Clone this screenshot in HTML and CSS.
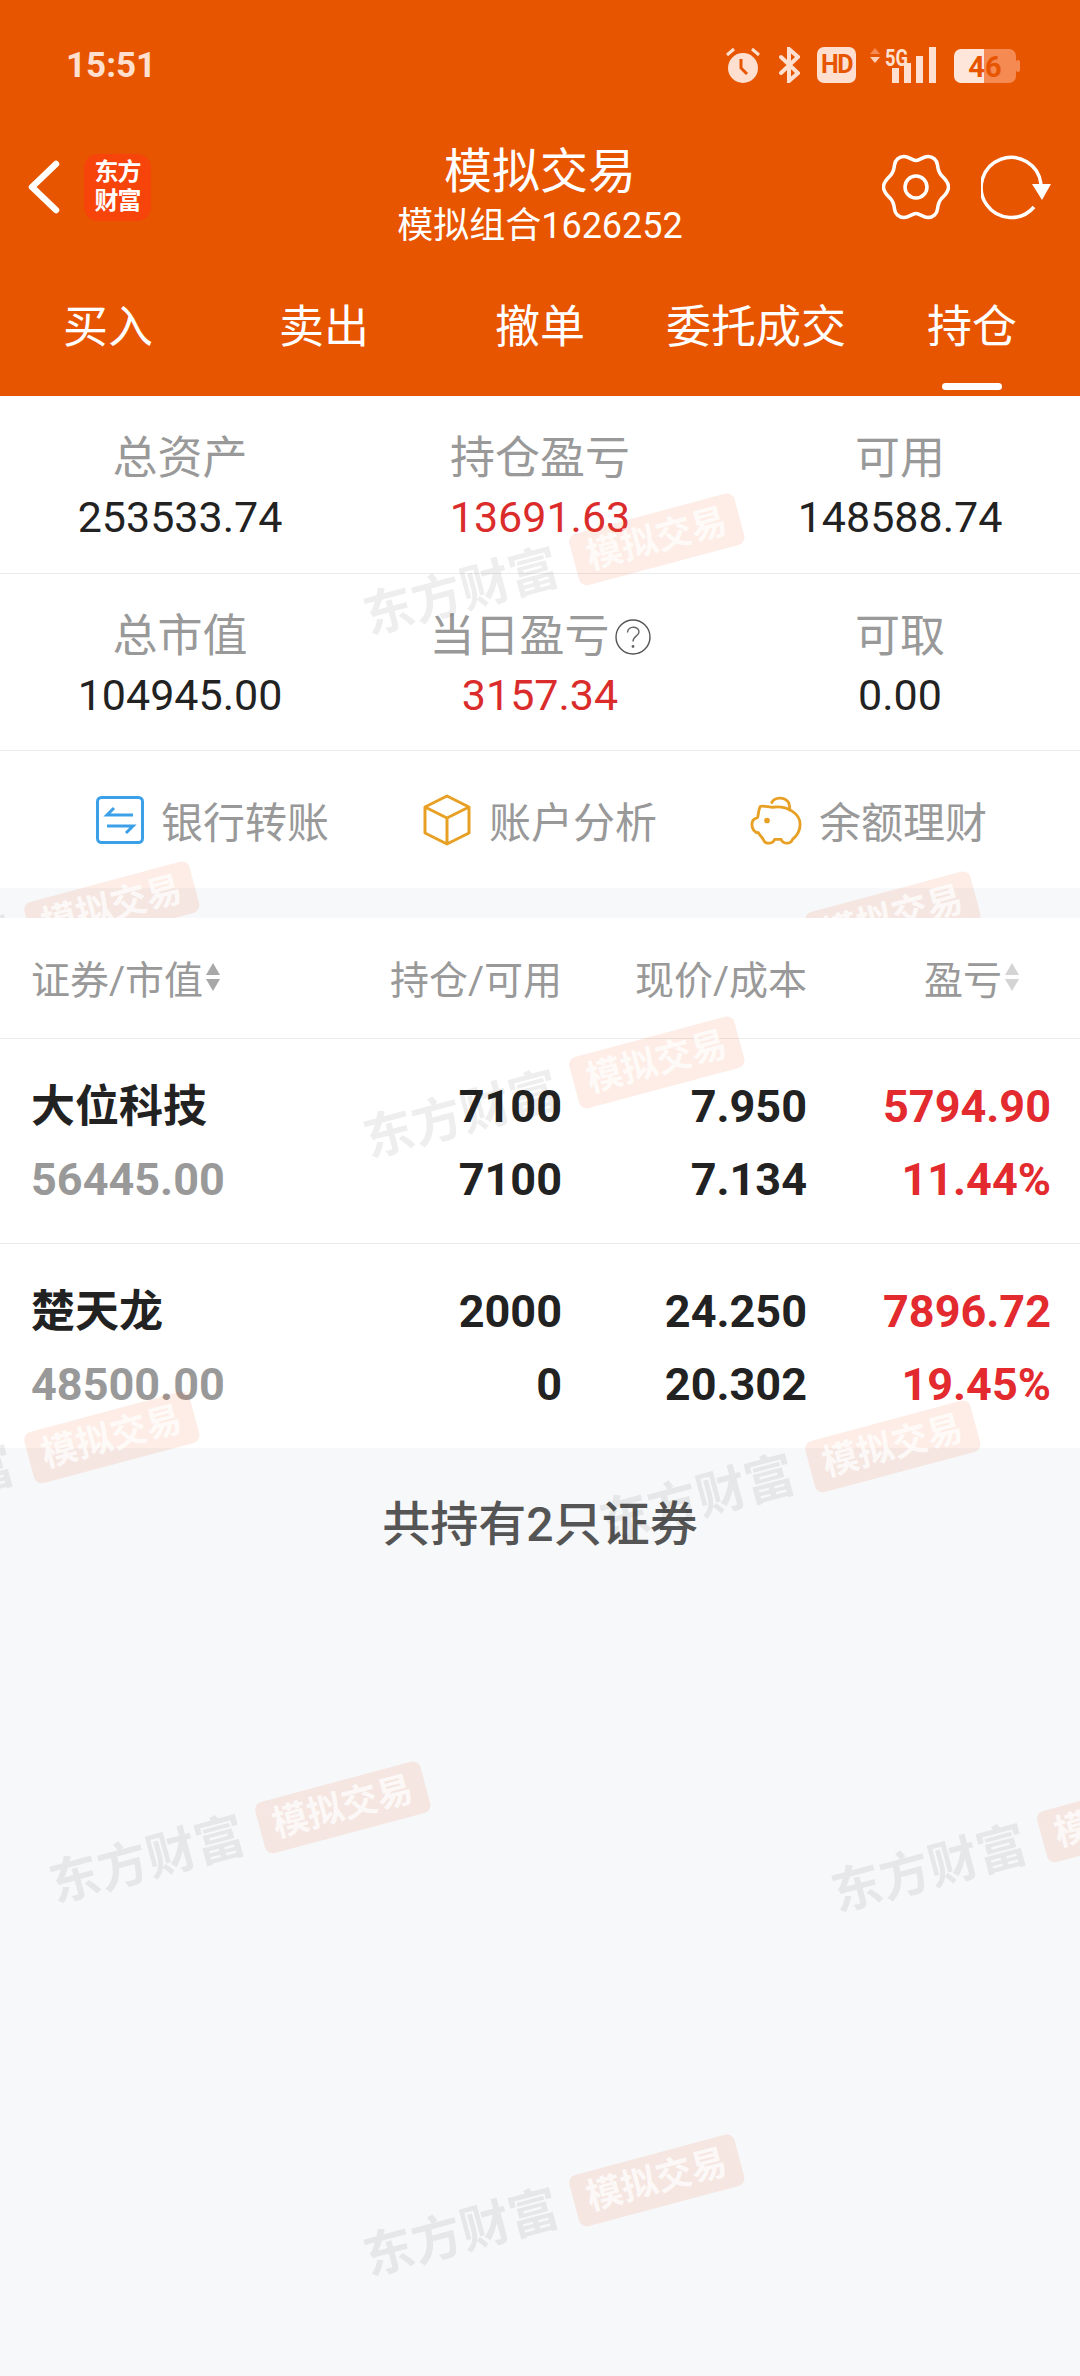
FILE: index.html
```html
<!DOCTYPE html>
<html lang="zh-CN">
<head>
<meta charset="utf-8">
<title>模拟交易</title>
<link rel="stylesheet" href="styles.css">
</head>
<body>
<div class="page">
  <header class="header">
    <div class="status">
      <span class="time">15:51</span>
      <div class="status-icons">
        <svg class="ic-alarm" width="36" height="36" viewBox="0 0 36 36"><circle cx="18" cy="21" r="15" fill="#FFE0D0"/><path d="M2 8 9 2M34 8 27 2" stroke="#FFE0D0" stroke-width="3" fill="none"/><path d="M16 12V21L22 27" stroke="#E75500" stroke-width="3" fill="none"/></svg>
        <svg class="ic-bt" width="21" height="36" viewBox="0 0 21 36"><path d="M2 10 19 26 10 34V2L19 10 2 26" stroke="#FFE0D0" stroke-width="4" fill="none" stroke-linecap="round"/></svg>
        <span class="hd">HD</span>
        <svg class="ic-net" width="67" height="36" viewBox="0 0 67 36"><path d="M0 7 5 1 10 7Z" fill="#F58A52"/><path d="M0 10H10L5 16Z" fill="#FFD0B8"/><text x="15" y="19" class="net-text" textLength="23" lengthAdjust="spacingAndGlyphs">5G</text><path d="M22 21h7v15h-7zM34 16h7v20h-7zM46 9h7v27h-7zM59 0h7v36h-7z" fill="#FFE0D0"/></svg>
        <svg class="ic-bat" width="67" height="36" viewBox="0 0 67 36"><path d="M8 2H31V36H8A7 7 0 0 1 1 29V9A7 7 0 0 1 8 2Z" fill="#FFE6DA"/><path d="M31 2H56A7 7 0 0 1 63 9V29A7 7 0 0 1 56 36H31Z" fill="#F58A52"/><rect x="63" y="13" width="4" height="12" rx="2" fill="#F58A52"/><text x="32" y="30" class="bat-text">46</text></svg>
      </div>
    </div>
    <div class="nav">
      <div class="nav-side">
        <svg class="ic-back" width="34" height="54" viewBox="0 0 34 54"><path d="M29 4 5 27 29 50" stroke="#fff" stroke-width="6.5" fill="none" stroke-linecap="round" stroke-linejoin="round"/></svg>
        <div class="logo"><span>东方</span><span>财富</span></div>
      </div>
      <div class="nav-title">
        <div class="title">模拟交易</div>
        <div class="subtitle">模拟组合1626252</div>
      </div>
      <div class="nav-side nav-right">
        <svg class="ic-gear" width="68" height="68" viewBox="0 0 68 68"><path d="M34 7.5C38 7.5 41 3.5 46 3.5C51 3.5 55 7 55.5 12C56 17 57 20 60 23C63 26 66.5 29 66.5 34C66.5 39 63 42 60 45C57 48 56 51 55.5 56C55 61 51 64.5 46 64.5C41 64.5 38 60.5 34 60.5C30 60.5 27 64.5 22 64.5C17 64.5 13 61 12.5 56C12 51 11 48 8 45C5 42 1.5 39 1.5 34C1.5 29 5 26 8 23C11 20 12 17 12.5 12C13 7 17 3.5 22 3.5C27 3.5 30 7.5 34 7.5Z" stroke="#fff" stroke-width="3.5" fill="none"/><circle cx="34" cy="34" r="11" stroke="#fff" stroke-width="3.5" fill="none"/></svg>
        <svg class="ic-refresh" width="72" height="68" viewBox="0 0 72 68"><path d="M53 54A30 30 0 1 1 60 31" stroke="#fff" stroke-width="3.5" fill="none"/><path d="M51 31H70L61 47Z" fill="#fff"/></svg>
      </div>
    </div>
    <nav class="tabs">
      <div class="tab">买入</div>
      <div class="tab">卖出</div>
      <div class="tab">撤单</div>
      <div class="tab">委托成交</div>
      <div class="tab tab-active">持仓<i class="tab-bar"></i></div>
    </nav>
  </header>

  <section class="stats">
    <div class="stat-row">
      <div class="stat"><div class="stat-label">总资产</div><div class="stat-value">253533.74</div></div>
      <div class="stat"><div class="stat-label">持仓盈亏</div><div class="stat-value red">13691.63</div></div>
      <div class="stat"><div class="stat-label">可用</div><div class="stat-value">148588.74</div></div>
    </div>
    <div class="stat-row">
      <div class="stat"><div class="stat-label">总市值</div><div class="stat-value">104945.00</div></div>
      <div class="stat"><div class="stat-label">当日盈亏<svg class="ic-help" width="36" height="36" viewBox="0 0 36 36"><circle cx="18" cy="18" r="17" stroke="#555" stroke-width="1.4" fill="none"/><path d="M12.5 13.5C12.5 6.5 24 6.5 24 13C24 17 18 17 18 22.5" stroke="#666" stroke-width="1.4" fill="none"/><circle cx="18" cy="27.5" r="1.4" fill="#666"/></svg></div><div class="stat-value red">3157.34</div></div>
      <div class="stat"><div class="stat-label">可取</div><div class="stat-value">0.00</div></div>
    </div>
  </section>

  <section class="actions">
    <div class="action">
      <svg width="48" height="48" viewBox="0 0 48 48"><rect x="1.5" y="1.5" width="45" height="45" rx="4" stroke="#3BA0E8" stroke-width="3" fill="none"/><path d="M18 12 11 19H37M11 30H37L30 37" stroke="#3BA0E8" stroke-width="3" fill="none"/></svg>
      <span>银行转账</span>
    </div>
    <div class="action">
      <svg width="50" height="52" viewBox="0 0 50 52"><path d="M25 2 47 13V39L25 50 3 39V13ZM3 13 25 24 47 13M25 24V50" stroke="#E8A024" stroke-width="3" fill="none" stroke-linejoin="round"/></svg>
      <span>账户分析</span>
    </div>
    <div class="action">
      <svg width="52" height="52" viewBox="0 0 55 53"><path d="M11 12C15 11 20 13 24 13C40 11 53 20 53 31C53 38 50 43 45 47C44 50 42 51 39 51C36 51 34 50 33 47L26 47C25 50 23 51 20 51C17 51 15 50 14 47C12 44 10 42 9 40C5 40 2 36 2 31C2 27 4 25 8 24C9 21 9 15 11 12Z" stroke="#E8A024" stroke-width="3" fill="none" stroke-linejoin="round"/><path d="M23 8C26 2 36 2 40 7C42 9 42 12 42 16" stroke="#E8A024" stroke-width="3" fill="none" stroke-linecap="round"/><circle cx="18" cy="27" r="3" fill="#E8A024"/></svg>
      <span>余额理财</span>
    </div>
  </section>

  <section class="table">
    <div class="thead">
      <div class="th th-left">证券/市值<svg class="ic-sort" width="18" height="30" viewBox="0 0 18 30"><path d="M9 1 16 13H2ZM2 17H16L9 29Z" fill="#A8A8A8"/></svg></div>
      <div class="th">持仓/可用</div>
      <div class="th">现价/成本</div>
      <div class="th th-last">盈亏<svg class="ic-sort" width="18" height="30" viewBox="0 0 18 30"><path d="M9 1 16 13H2ZM2 17H16L9 29Z" fill="#D4D4D4"/></svg></div>
    </div>
    <div class="trow">
      <div class="name">大位科技</div><div class="num">7100</div><div class="num">7.950</div><div class="num red-b">5794.90</div>
      <div class="num-l">56445.00</div><div class="num">7100</div><div class="num">7.134</div><div class="num red-b">11.44%</div>
    </div>
    <div class="trow trow-last">
      <div class="name">楚天龙</div><div class="num">2000</div><div class="num">24.250</div><div class="num red-b">7896.72</div>
      <div class="num-l">48500.00</div><div class="num">0</div><div class="num">20.302</div><div class="num red-b">19.45%</div>
    </div>
  </section>

  <div class="summary">共持有2只证券</div>

  <div class="wm wm-under wm-2"><span class="wm-name">东方财富</span><span class="wm-badge">模拟交易</span></div>
  <div class="wm wm-under wm-3"><span class="wm-name">东方财富</span><span class="wm-badge">模拟交易</span></div>
  <div class="wm wm-1"><span class="wm-name">东方财富</span><span class="wm-badge">模拟交易</span></div>
  <div class="wm wm-4"><span class="wm-name">东方财富</span><span class="wm-badge">模拟交易</span></div>
  <div class="wm wm-5"><span class="wm-name">东方财富</span><span class="wm-badge">模拟交易</span></div>
  <div class="wm wm-6"><span class="wm-name">东方财富</span><span class="wm-badge">模拟交易</span></div>
  <div class="wm wm-7"><span class="wm-name">东方财富</span><span class="wm-badge">模拟交易</span></div>
  <div class="wm wm-8"><span class="wm-name">东方财富</span><span class="wm-badge">模拟交易</span></div>
  <div class="wm wm-9"><span class="wm-name">东方财富</span><span class="wm-badge">模拟交易</span></div>
</div>
</body>
</html>
```
FILE: styles.css
```css
* { box-sizing: border-box; }
html, body { margin: 0; padding: 0; }
body {
  font-family: Roboto, "Noto Sans CJK SC", sans-serif;
  background: #F7F8FA;
}
.page {
  position: relative;
  width: 1080px;
  height: 2376px;
  overflow: hidden;
  background: #F7F8FA;
}

/* header */
.header { background: #E75500; height: 396px; color: #fff; }
.status { height: 130px; display: flex; align-items: center; padding: 0 60px 0 66px; }
.time { font-size: 35px; font-weight: 700; color: #FFE0D0; }
.status-icons { margin-left: auto; display: flex; align-items: center; }
.ic-alarm { margin-right: 18px; }
.ic-bt { margin-right: 17px; }
.hd {
  width: 39px; height: 36px; margin-right: 14px;
  background: #FFE0D0; color: #E75500; border-radius: 7px;
  font-size: 25px; font-weight: 700; line-height: 36px; text-align: center;
  letter-spacing: -1.5px;
}
.ic-net { margin-right: 16px; overflow: visible; }
.net-text { font-size: 24px; font-weight: 700; fill: #FFE0D0; }
.bat-text { font-size: 29px; font-weight: 700; fill: #E75500; text-anchor: middle; }

.nav { height: 132px; display: grid; grid-template-columns: 1fr auto 1fr; align-items: start; }
.nav-side { height: 114px; display: flex; align-items: center; padding-left: 27px; }
.nav-right { justify-content: flex-end; padding: 0 27px 0 0; }
.ic-back { margin-right: 23px; }
.logo {
  width: 67px; height: 67px; border-radius: 14px;
  background: #F6440B; color: #fff;
  display: flex; flex-direction: column; align-items: center; justify-content: center;
  font-size: 24px; font-weight: 700; line-height: 29px; letter-spacing: -1px;
}
.ic-gear { margin-right: 31px; }
.nav-title { text-align: center; padding-top: 14px; }
.title { font-size: 48px; line-height: 56px; }
.subtitle { font-size: 36px; line-height: 44px; margin-top: 4px; }

.tabs { display: grid; grid-template-columns: repeat(5, 1fr); height: 134px; padding-top: 41px; }
.tab { display: flex; flex-direction: column; align-items: center; font-size: 45px; line-height: 50px; }
.tab-bar { display: block; width: 60px; height: 7px; margin-top: 30px; background: #fff; border-radius: 4px; }

/* stats */
.stats { background: #fff; }
.stat-row {
  display: grid; grid-template-columns: repeat(3, 1fr);
  height: 177.5px; padding-top: 33px;
  border-bottom: 1px solid #EBEBEB;
  text-align: center;
}
.stat-label {
  display: flex; align-items: center; justify-content: center; gap: 5px;
  font-size: 45px; line-height: 60px; color: #999;
}
.stat-value { font-size: 43px; line-height: 50px; margin-top: 3px; color: #222; }
.red { color: #DB2C2C; }

/* actions */
.actions {
  height: 137px; background: #fff; padding-left: 3px;
  display: flex; align-items: center; justify-content: space-evenly;
  margin-bottom: 30px;
}
.action { display: flex; align-items: center; gap: 17px; font-size: 42px; color: #999; }

/* table */
.table { position: relative; z-index: 1; background: #fff; }
.thead, .trow {
  display: grid;
  grid-template-columns: 282px 249px 245px 244px;
  padding: 0 29px 0 31px;
  border-bottom: 1px solid #EBEBEB;
}
.thead { height: 121px; align-items: center; padding-bottom: 2px; }
.th {
  display: flex; align-items: center; justify-content: flex-end;
  font-size: 39px; color: #999;
}
.th-left { justify-content: flex-start; }
.th-last { padding-right: 30px; }
.ic-sort { margin-left: 1px; }
.trow { height: 204.5px; padding-top: 38px; row-gap: 13px; grid-auto-rows: 60px; }
.trow-last { border-bottom: 0; }
.name { font-size: 44px; line-height: 60px; font-weight: 700; color: #222; }
.num, .num-l { font-size: 45px; line-height: 60px; font-weight: 700; }
.num { text-align: right; color: #222; }
.num-l { color: #999; }
.red-b { color: #E22A2F; }

.summary {
  padding-top: 47px; text-align: center;
  font-size: 48px; line-height: 60px; font-weight: 500; color: #555;
}

/* watermark tiles sit on a free canvas over the page */
.wm {
  position: absolute; z-index: 2;
  width: 388px; height: 53px;
  display: flex; align-items: center; gap: 17px;
  transform: rotate(-15deg);
  pointer-events: none;
}
.wm-under { z-index: 0; }
.wm-name { font-size: 50px; line-height: 52px; font-weight: 700; color: rgba(0, 0, 0, .065); white-space: nowrap; }
.wm-badge {
  flex: 1; height: 53px; border-radius: 8px;
  background: rgba(238, 90, 30, .11); color: rgba(255, 255, 255, .75);
  font-size: 36px; font-weight: 700; line-height: 53px; text-align: center; white-space: nowrap;
}
.wm-1 { left: 358px; top: 541px; }
.wm-2 { left: -187px; top: 909px; }
.wm-3 { left: 594px; top: 919px; }
.wm-4 { left: 358px; top: 1064px; }
.wm-5 { left: -187px; top: 1439px; }
.wm-6 { left: 594px; top: 1448px; }
.wm-7 { left: 44px; top: 1809px; }
.wm-8 { left: 826px; top: 1818px; }
.wm-9 { left: 358px; top: 2182px; }
```
